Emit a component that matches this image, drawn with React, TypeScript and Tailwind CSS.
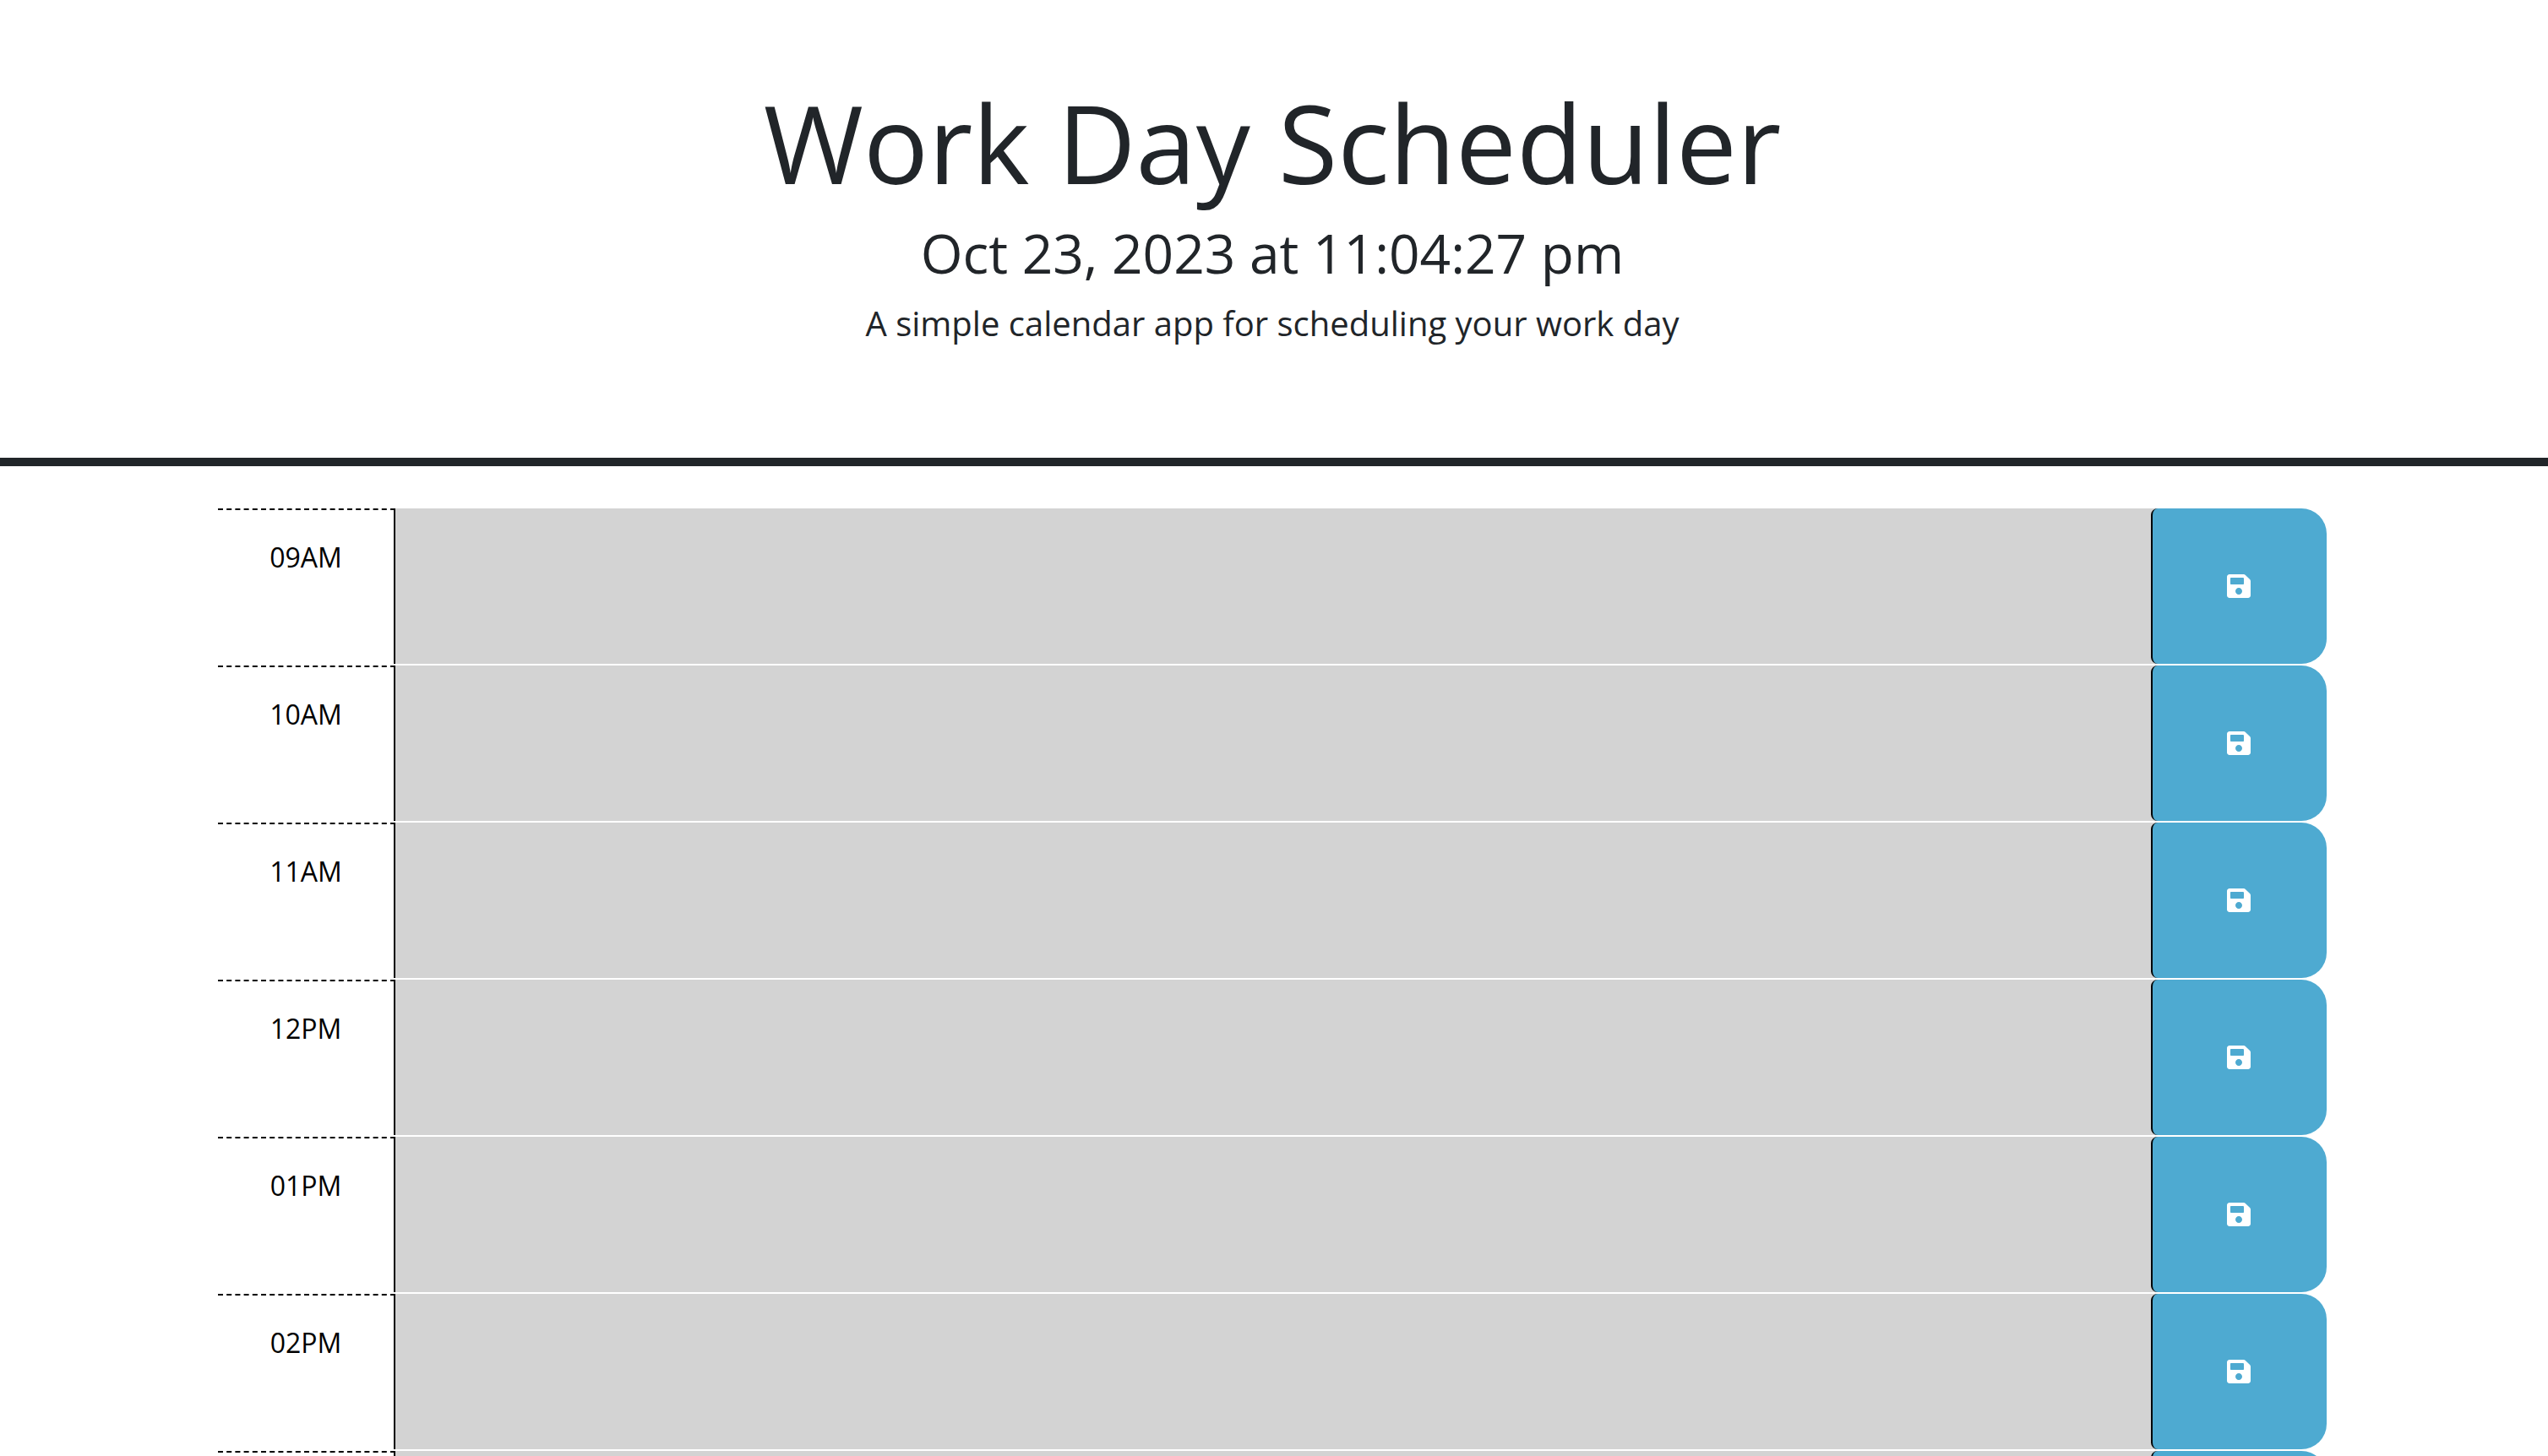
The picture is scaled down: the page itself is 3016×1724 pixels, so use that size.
import { FaSave } from 'react-icons/fa';

const horas = ['09AM', '10AM', '11AM', '12PM', '01PM', '02PM', ''];

export default function App() {
  return (
    <div className="h-screen overflow-hidden bg-white font-['Open_Sans',sans-serif] text-[#212529]">
      <header className="h-[552px] border-b-[10px] border-[#212529] pt-[92px] pr-[4px] text-center">
        <h1 className="text-[128px] leading-[1.2] font-normal">Work Day Scheduler</h1>
        <p className="mt-[16px] text-[64px] leading-[1.2] font-normal">Oct 23, 2023 at 11:04:27 pm</p>
        <p className="mt-[15px] text-[40px] leading-[1.5] font-normal">A simple calendar app for scheduling your work day</p>
      </header>

      <main className="pt-[50px] pl-[258px] pr-[262px]">
        {horas.map((hora, i) => (
          <div key={i} className="flex h-[186px] pb-[2px]">
            <div className="w-[210px] shrink-0 border-t-2 border-r-2 border-t-black border-r-black pt-[32px] text-center text-[32px] leading-[48px] text-black [border-top-style:dashed] [border-right-style:solid]">
              {hora}
            </div>
            <textarea className="-mr-[10px] min-w-0 flex-1 resize-none bg-[#d3d3d3] outline-none" />
            <button className="relative flex w-[208px] shrink-0 items-center justify-center rounded-tl-[8px] rounded-tr-[30px] rounded-br-[30px] rounded-bl-[8px] border-l-2 border-black bg-[#4eaad1] pr-[2px] text-white">
              <FaSave size={32} />
            </button>
          </div>
        ))}
      </main>
    </div>
  );
}
